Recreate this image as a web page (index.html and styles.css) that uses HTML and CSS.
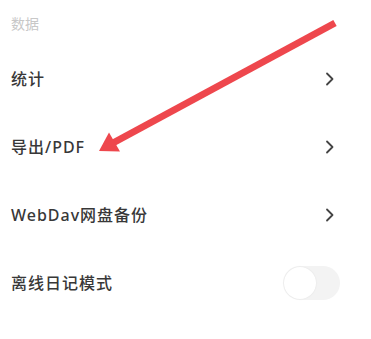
FILE: index.html
```html
<!DOCTYPE html>
<html>
<head>
<meta charset="utf-8">
<link rel="stylesheet" href="styles.css">
</head>
<body>
<div class="page">
  <div class="section-title">数据</div>
  <div class="row">
    <span class="label">统计</span>
    <svg class="chev" width="10" height="14" viewBox="0 0 10 14"><path d="M2 1.5 L7.5 7 L2 12.5" fill="none" stroke="#444" stroke-width="1.8" stroke-linecap="round" stroke-linejoin="round"/></svg>
  </div>
  <div class="row">
    <span class="label">导出/PDF</span>
    <svg class="chev" width="10" height="14" viewBox="0 0 10 14"><path d="M2 1.5 L7.5 7 L2 12.5" fill="none" stroke="#444" stroke-width="1.8" stroke-linecap="round" stroke-linejoin="round"/></svg>
  </div>
  <div class="row">
    <span class="label">WebDav网盘备份</span>
    <svg class="chev" width="10" height="14" viewBox="0 0 10 14"><path d="M2 1.5 L7.5 7 L2 12.5" fill="none" stroke="#444" stroke-width="1.8" stroke-linecap="round" stroke-linejoin="round"/></svg>
  </div>
  <div class="row">
    <span class="label">离线日记模式</span>
    <span class="toggle"><span class="knob"></span></span>
  </div>
  <svg class="arrow" width="371" height="339" viewBox="0 0 371 339">
    <line x1="335" y1="23" x2="112" y2="143.5" stroke="#ee474d" stroke-width="7"/>
    <polygon points="99,151 120,151.5 109,132.5" fill="#ee474d"/>
  </svg>
</div>
</body>
</html>
```
FILE: styles.css
```css
html, body {
  margin: 0;
  padding: 0;
  background: #fff;
}
.page {
  position: relative;
  width: 371px;
  height: 339px;
  font-family: "Noto Sans", "Noto Sans CJK SC", sans-serif;
  overflow: hidden;
}
.section-title {
  height: 45px;
  box-sizing: border-box;
  padding: 14px 0 0 11px;
  font-size: 14px;
  line-height: 20px;
  color: #c8c8c8;
}
.row {
  height: 68px;
  display: flex;
  align-items: center;
  justify-content: space-between;
  padding: 0 34px 0 11px;
}
.label {
  font-size: 16px;
  font-weight: 500;
  letter-spacing: 1px;
  color: #383838;
  line-height: 22px;
}
.chev {
  display: block;
  margin-right: 2px;
}
.toggle {
  position: relative;
  display: block;
  width: 57px;
  height: 34px;
  margin-right: -3px;
  border-radius: 17px;
  background: #f3f3f3;
}
.knob {
  position: absolute;
  left: 1px;
  top: 1px;
  width: 32px;
  height: 32px;
  border-radius: 50%;
  background: #fff;
  box-shadow: 0 0 2px rgba(0,0,0,0.08);
}
.arrow {
  position: absolute;
  left: 0;
  top: 0;
  pointer-events: none;
}
```
